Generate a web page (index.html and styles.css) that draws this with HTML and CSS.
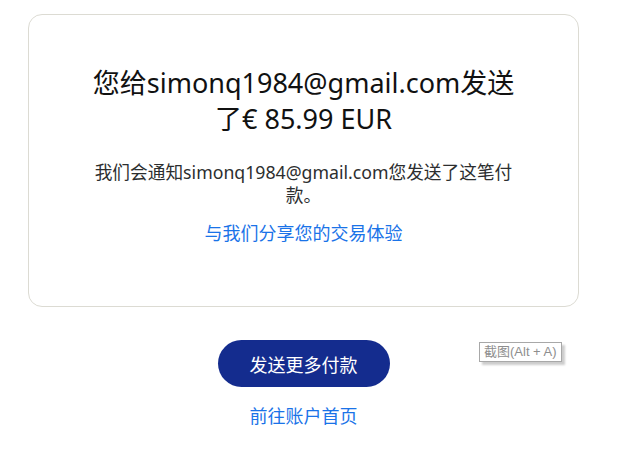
FILE: index.html
```html
<!DOCTYPE html>
<html lang="zh-CN">
<head>
    <meta charset="UTF-8">
    <title>付款已发送</title>
    <link rel="stylesheet" href="styles.css">
</head>
<body>
    <div class="page">
        <div class="card">
            <h1 class="title">您给simonq1984@gmail.com发送了€ 85.99 EUR</h1>
            <p class="notice">我们会通知simonq1984@gmail.com您发送了这笔付款。</p>
            <a class="link" href="#">与我们分享您的交易体验</a>
        </div>

        <div class="actions">
            <button type="button" class="btn-primary">发送更多付款</button>
            <a class="link" href="#">前往账户首页</a>
            <span class="hint">截图(Alt + A)</span>
        </div>
    </div>
</body>
</html>
```

FILE: styles.css
```css
body {
    font-family: "Noto Sans", "Noto Sans CJK SC", sans-serif;
    background: #ffffff;
    color: #1c1c1c;
    margin: 0;
    padding: 14px 0 0 28px;
}

.page {
    width: 551px;
}

.card {
    border: 1px solid #dcdbd3;
    border-radius: 14px;
    height: 293px;
    box-sizing: border-box;
    padding-top: 50px;
    display: flex;
    flex-direction: column;
    align-items: center;
    text-align: center;
}

.title {
    font-size: 27px;
    font-weight: 400;
    line-height: 36px;
    max-width: 440px;
    margin: 0;
    color: #111;
}

.notice {
    font-size: 17.7px;
    line-height: 23px;
    max-width: 424px;
    margin: 24px 0 14px;
    color: #2c2e2f;
}

.link {
    font-size: 18px;
    line-height: 24px;
    color: #1a73e8;
    text-decoration: none;
}

.actions {
    position: relative;
    display: flex;
    flex-direction: column;
    align-items: center;
    gap: 17px;
    padding-top: 33px;
}

.btn-primary {
    width: 172px;
    height: 47px;
    border: none;
    border-radius: 24px;
    background: #142c8e;
    color: #fff;
    font-family: inherit;
    font-size: 18px;
    cursor: pointer;
}

.hint {
    position: absolute;
    top: 35px;
    left: 451px;
    padding: 1px 4px;
    border: 1px solid #a8a8a8;
    background: #fff;
    color: #8e8e8e;
    font-family: "Liberation Sans", sans-serif;
    font-size: 13px;
    line-height: 16px;
    box-shadow: 3px 3px 2px rgba(0, 0, 0, 0.2);
}
```
